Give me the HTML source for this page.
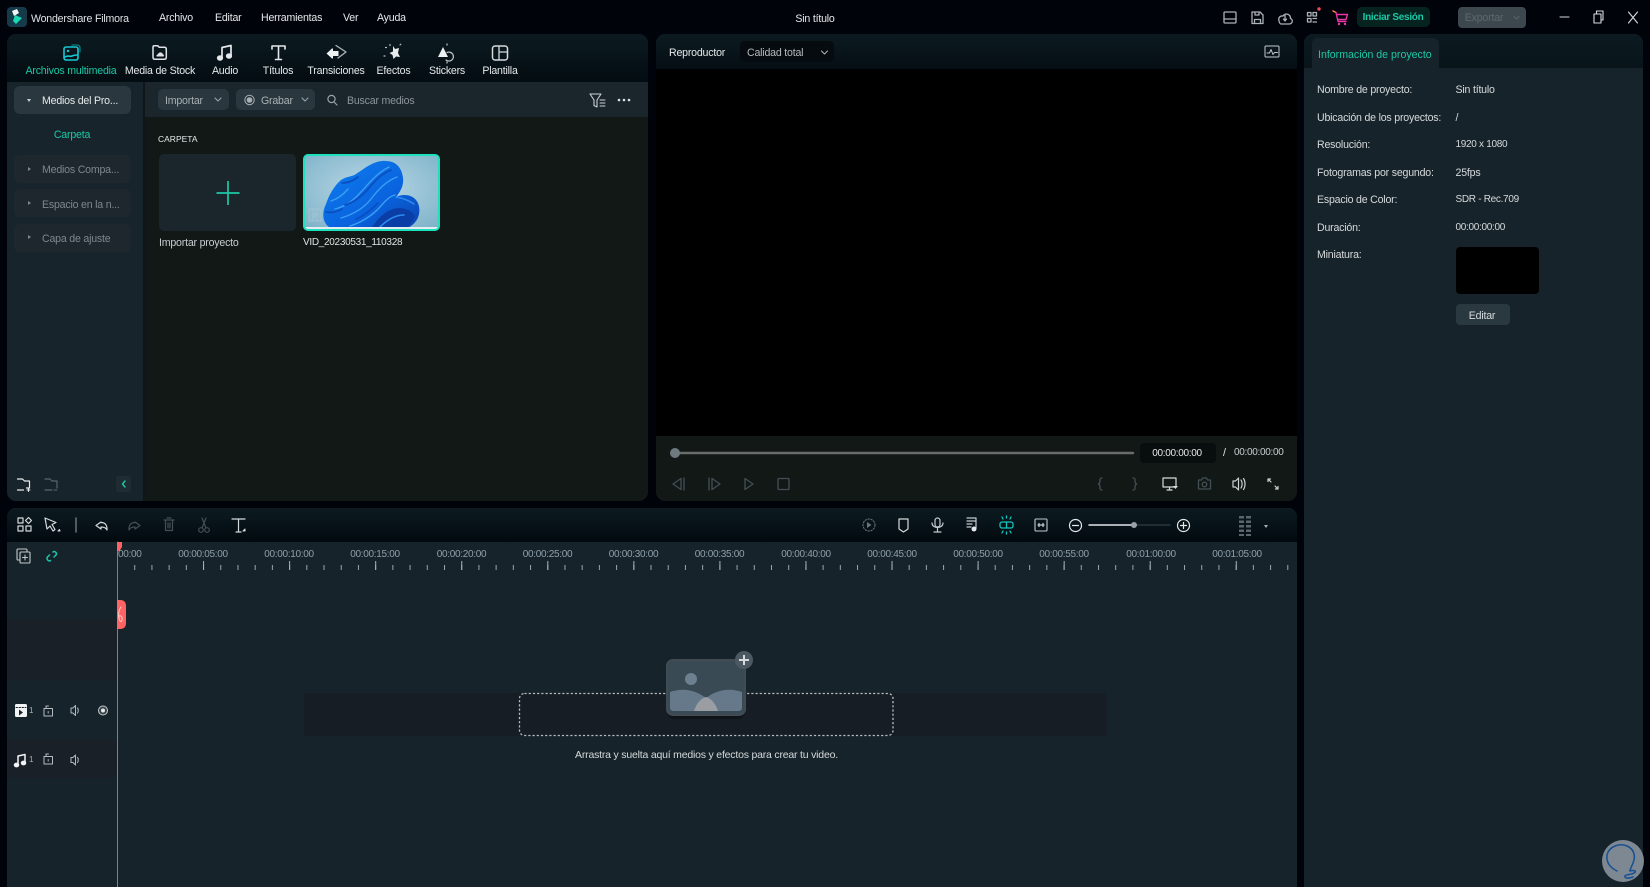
<!DOCTYPE html>
<html lang="es"><head><meta charset="utf-8"><title>Wondershare Filmora</title>
<style>
html,body{margin:0;padding:0;width:1650px;height:887px;overflow:hidden;background:#00030a}
body{position:relative;font-family:"Liberation Sans",sans-serif;font-size:10.6px;letter-spacing:-.2px;color:#d5dadc}
div{position:absolute;box-sizing:border-box}
.t{position:absolute;white-space:nowrap;transform:translateY(calc(-50% + 2px));line-height:14px}
.c{position:absolute;white-space:nowrap;transform:translate(-50%,calc(-50% + 2px));line-height:14px}
.g{color:#1cc8a6}.d{color:#7e878c}.w{color:#e6e9ea}
.n{font-size:10px;letter-spacing:-.3px}
.side{background:#1e272e;border-radius:6px;left:14px;width:117px;height:28px}
svg{position:absolute;left:0;top:0}
.r{color:#8ea0ab;font-size:10px;letter-spacing:-.3px}
</style></head><body>

<div style="left:7px;top:34px;width:641px;height:467px;background:#111816;border-radius:9px;overflow:hidden">
 <div style="left:0;top:0;width:641px;height:48px;background:linear-gradient(#0c1b21,#030c11)"></div>
 <div style="left:136px;top:48px;width:505px;height:35px;background:#1a262c"></div>
 <div style="left:0;top:48px;width:136px;height:419px;background:#18242b"></div>
 <div style="left:136px;top:48px;width:2px;height:419px;background:#0f1518"></div>
</div>
<div class="side" style="top:86px;background:#2a373e"></div>
<div class="side" style="top:155px"></div>
<div class="side" style="top:189px"></div>
<div class="side" style="top:224px"></div>
<div style="left:158px;top:89px;width:71px;height:21px;background:#2a373e;border-radius:5px"></div>
<div style="left:236px;top:89px;width:79px;height:21px;background:#2a373e;border-radius:5px"></div>
<div style="left:159px;top:154px;width:137px;height:77px;background:#1a262c;border-radius:5px"></div>
<div style="left:116px;top:476px;width:15px;height:16px;background:#1f2d33;border-radius:3px"></div>

<div style="left:656px;top:34px;width:641px;height:467px;background:#111816;border-radius:9px;overflow:hidden">
 <div style="left:0;top:0;width:641px;height:35px;background:linear-gradient(#0c1b21,#050e13)"></div>
 <div style="left:0;top:35px;width:641px;height:367px;background:#000"></div>
</div>
<div style="left:740px;top:41px;width:94px;height:21px;background:#050b0f;border-radius:5px"></div>
<div style="left:1140px;top:443px;width:76px;height:20px;background:#080d0e;border-radius:4px"></div>

<div style="left:1304px;top:34px;width:339px;height:853px;background:#17232a;border-radius:9px 9px 0 0;overflow:hidden">
 <div style="left:0;top:0;width:339px;height:34px;background:linear-gradient(#0c1b21,#08141a)"></div>
 <div style="left:8px;top:4px;width:127px;height:30px;background:#17232a;border-radius:6px 6px 0 0"></div>
</div>
<div style="left:1455.500px;top:247px;width:83px;height:47px;background:#000;border-radius:4px"></div>
<div style="left:1455.500px;top:304px;width:54px;height:21px;background:#2a383f;border-radius:4px"></div>

<div style="left:7px;top:508px;width:1290px;height:379px;background:#17232a;border-radius:9px 9px 0 0;overflow:hidden">
 <div style="left:0;top:0;width:1290px;height:34px;background:linear-gradient(#0c1b21,#020a0f)"></div>
 <div style="left:0;top:112px;width:110px;height:60px;background:#1a2027"></div>
 <div style="left:0;top:232px;width:110px;height:38px;background:#1a2027"></div>
 <div style="left:297px;top:185px;width:803px;height:43px;background:#171d25"></div>
</div>

<div style="left:1357px;top:7px;width:73px;height:20px;background:#06231f;border-radius:5px"></div>
<div style="left:1458px;top:7px;width:68px;height:21px;background:#3c474e;border-radius:4px"></div>

<svg width="1650" height="887" viewBox="0 0 1650 887" fill="none" stroke-linecap="round" stroke-linejoin="round">
 <defs>
  <pattern id="mn" x="117" y="565" width="17.21" height="5" patternUnits="userSpaceOnUse"><rect width="1" height="5" fill="#9aa6ac"/></pattern>
  <pattern id="mj" x="117" y="561" width="86.06" height="9" patternUnits="userSpaceOnUse"><rect width="1" height="9" fill="#aab3b8"/></pattern>
  <linearGradient id="bl" x1="0" y1="0" x2="1" y2="1"><stop offset="0" stop-color="#0d7ff0"/><stop offset=".6" stop-color="#0a63de"/><stop offset="1" stop-color="#0b44b0"/></linearGradient>
  <radialGradient id="sky" cx=".5" cy=".45" r=".7"><stop offset="0" stop-color="#b9d8e6"/><stop offset="1" stop-color="#7fb3c9"/></radialGradient>
  <clipPath id="tc"><rect x="304" y="155" width="135" height="75" rx="4"/></clipPath>
 </defs>
 <!-- logo -->
 <rect x="7" y="7" width="20" height="20" rx="4" fill="#153a4a"/>
 <path d="M12 11l5-2 2 4-5 3z" fill="#f2f5f5"/><path d="M15 15l7 3-6 6-3-3z" fill="#19d9b0"/>
 <!-- media tabs -->
 <g stroke="#16c9d3" stroke-width="1.6"><rect x="64" y="47" width="14" height="13" rx="2"/><circle cx="68" cy="51" r="1.2" fill="#16c9d3" stroke="none"/><path d="M65 57c3-2 5 0 7-1s4-1 5-1"/><path d="M72 45h5c2 0 3 1 3 3v4" stroke="#0d7b80" stroke-width="1.3"/></g>
 <path d="M153 47c0-.8.6-1.300 1.300-1.300h3.400l1.600 1.600h5c1.200 0 2 .8 2 2v8c0 1.200-.8 2-2 2h-9.300c-1.200 0-2-.8-2-2z" stroke="#dfe3e5" stroke-width="1.500"/>
 <path d="M157 56.500h6c1.300 0 1.300-2.300-.2-2.300-.3-2.400-4.300-2.400-4.800 0-1.600 0-2 2.300-1 2.300z" fill="#dfe3e5"/>
 <g stroke="#e4e8ea" stroke-width="1.700"><path d="M222 58V47.500l9-2V56"/><ellipse cx="220" cy="58" rx="2.300" ry="1.900" fill="#e4e8ea"/><ellipse cx="229" cy="56" rx="2.300" ry="1.900" fill="#e4e8ea"/></g>
 <path d="M272 49v-3h13v3M278.500 46v13.500M275.500 59.500h6" stroke="#e4e8ea" stroke-width="1.600"/>
 <path d="M326.500 53.500l5.500-5h1v2.500h5.500v5H333v2.500h-1z" fill="#eef1f2"/>
 <path d="M336 45.500l10 6.500-8 6" stroke="#aeb6ba" stroke-width="1.300"/>
 <path d="M393 46l2 3 4-1-1 5 2 4-4-.5-2.500 2.500-1-4-3-2 3.500-1.500z" fill="#e8ebec"/>
 <path d="M385.500 47.500h1M390 44.500v1M400 45l.8-.8M384 56h1" stroke="#b5bdc1" stroke-width="1.200"/>
 <path d="M443 47l5 10h-10z" fill="#eef1f2"/>
 <path d="M447 52.500a4.500 4.500 0 1 1-1 7.500" stroke="#c4cbce" stroke-width="1.200"/>
 <path d="M447 44v1M447 62v1" stroke="#c4cbce" stroke-width="1.200"/>
 <rect x="492.500" y="46" width="15" height="14" rx="2.500" stroke="#d5dadc" stroke-width="1.500"/><path d="M499 46v14M499 52h8.500" stroke="#d5dadc" stroke-width="1.300"/>
 <!-- sidebar arrows -->
 <path d="M27 99h4l-2 3z" fill="#c8ced1"/>
 <path d="M28 167v4l3-2zM28 201v4l3-2zM28 235v4l3-2z" fill="#7e878c"/>
 <!-- subtool -->
 <path d="M215 98l3 3 3-3M302 98l3 3 3-3" stroke="#98a2a7" stroke-width="1.100"/>
 <circle cx="249.500" cy="100" r="4.700" stroke="#a8b0b4"/><circle cx="249.500" cy="100" r="2.800" fill="#a8b0b4"/>
 <circle cx="331.500" cy="99" r="3.600" stroke="#98a2a7" stroke-width="1.200"/><path d="M334 102l3 3" stroke="#98a2a7" stroke-width="1.200"/>
 <path d="M590 94h11l-4 6v7l-3-1.500V100z" stroke="#ccd1d4" stroke-width="1.100"/><path d="M600 100h5M600 103h5M600 106h5" stroke="#ccd1d4"/>
 <circle cx="619" cy="100" r="1.300" fill="#dfe3e5"/><circle cx="624" cy="100" r="1.300" fill="#dfe3e5"/><circle cx="629" cy="100" r="1.300" fill="#dfe3e5"/>
 <path d="M216.500 193h23M228 181v24" stroke="#1cc8a6" stroke-width="1.700" stroke-linecap="butt"/>
 <!-- thumbnail -->
 <g clip-path="url(#tc)">
  <rect x="304" y="155" width="135" height="75" fill="url(#sky)"/>
  <path d="M329 227C322 222 322 212 326 204C329 195 334 186 341 180C347 176 352 177 356 174C364 169 374 160 386 161C396 161 402 168 403 178C404 186 400 192 396 197C402 194 411 194 416 200C421 206 420 216 416 221C414 224 411 226 408 228Z" fill="url(#bl)"/>
  <path d="M331 201c6-2 12-6 17-12M335 209c8-2 17-7 24-15 8-8 16-20 30-27M341 218c10-3 22-9 30-19 7-9 15-18 26-22M350 226c10-3 22-10 30-19 6-7 10-11 15-12" stroke="#3aa0f5" stroke-width="1.400"/>
  <path d="M326 212c5 1 11 0 16-3M342 183c6 0 11-2 16-6M345 205c10-3 18-10 24-17 6-7 12-14 22-18M356 219c8-3 16-10 22-16" stroke="#0a4fc0" stroke-width="1.800"/>
  <path d="M372 227c6-9 15-18 26-19 8 0 14 3 17 8-2 5-5 9-9 12z" fill="#0a3ea6"/>
  <path d="M380 227c6-6 14-12 24-12M396 197c6 1 12 3 18 7" stroke="#2d8bf0" stroke-width="1.500"/>
  <rect x="304" y="227" width="135" height="2" fill="#e4eef2"/>
 </g>
 <rect x="304" y="155" width="135" height="75" rx="4" stroke="#1fe0bc" stroke-width="2"/>
 <rect x="309" y="209" width="12" height="12" stroke="#a3c4d3" stroke-width="1" fill="#9dc0d0" fill-opacity=".3"/><path d="M313 209v12M317 209v12M314 213l3 2-3 2z" stroke="#a3c4d3" stroke-width=".8"/>
 <!-- folder icons -->
 <path d="M17.500 479h5l2 2h5v7h-3m-3 2h-6z" stroke="#e8ebec" stroke-width="1.200"/><path d="M27 490h3M28.500 488.500v3" stroke="#e8ebec"/>
 <path d="M45 479h5l2 2h5v7M52 490h-7z" stroke="#5b6468" stroke-width="1.200"/><path d="M54 490h3" stroke="#5b6468"/>
 <path d="M125 481l-2.500 3 2.500 3" stroke="#1cc8a6" stroke-width="1.400"/>
 <!-- top icons -->
 <g stroke="#aab2b6" stroke-width="1.300">
  <rect x="1224" y="12" width="12" height="11" rx="1"/><path d="M1224 19h12"/>
  <path d="M1252 12h8l3 3v8.500h-11zM1254.500 23.500v-4h6v4M1255 12v3h4v-3"/>
  <path d="M1281 24h8c3.500 0 4.500-4.500 1.500-5.500 0-4.500-5-6-7.500-2.500-3-.5-5 2-4 5 .5 2 1 3 2 3zM1285 15v6M1283.500 19l1.500 2 1.500-2"/>
  <path d="M1307.500 12.500h3.500v3.500h-3.500zM1313 12.500h3.500v3.500H1313zM1307.500 18.500h3.500V22h-3.500zM1313 18.500h3.500M1313 22h3.500"/>
 </g>
 <circle cx="1319" cy="9" r="1.700" fill="#ee4b57"/>
 <path d="M1333 11l3 1.500 2 9h8M1337 14.500h10.500l-1.500 5h-8" stroke="#e837a4" stroke-width="1.400"/><path d="M1333 11l2 1" stroke="#ef8c3a" stroke-width="1.400"/>
 <circle cx="1339" cy="24" r="1.200" fill="#e837a4"/><circle cx="1345" cy="24" r="1.200" fill="#e837a4"/>
 <path d="M1519 16.500l-2.500 2.500-2.500-2.500" stroke="#59656b"/>
 <path d="M1560 17h9" stroke="#d5dadc" stroke-width="1.100"/>
 <path d="M1594 14h7v9h-7zM1596.500 14v-3h6.500v9h-2" stroke="#d5dadc" stroke-width="1.100"/>
 <path d="M1628.500 12l9 11M1637.500 12l-9 11" stroke="#d5dadc" stroke-width="1.100"/>
 <!-- player header -->
 <path d="M821.500 51l3 3 3-3" stroke="#a8b0b4" stroke-width="1.100"/>
 <rect x="1265" y="46" width="14" height="11" rx="1" stroke="#c3c9cc"/><path d="M1267 53l2.500 0 1.500-3.500 2 5 1.500-2h3" stroke="#c3c9cc"/>
 <!-- scrubber -->
 <path d="M674 453h459" stroke="#6a6d6b" stroke-width="2.500"/><circle cx="675" cy="453" r="5" fill="#6f7a80"/>
 <!-- player controls -->
 <g stroke="#444f55" stroke-width="1.300">
  <path d="M684 478v12M681 478.500l-8 5.500 8 5.500z"/>
  <path d="M709 478v12M712 478.500l8 5.500-8 5.500z"/>
  <path d="M745 478.500l8 5.500-8 5.500z"/>
  <rect x="778" y="478.500" width="11" height="11" rx="1"/>
  <path d="M1102 478c-2 0-2 1-2 2.500s0 3-1.700 3.500c1.700.5 1.700 2 1.700 3.500s0 2.500 2 2.500"/>
  <path d="M1133 478c2 0 2 1 2 2.500s0 3 1.700 3.500c-1.700.5-1.700 2-1.700 3.500s0 2.500-2 2.500"/>
  <path d="M1198.500 480h3l1-2h4l1 2h3v9h-12z"/><circle cx="1204.500" cy="484.500" r="2.300"/>
 </g>
 <path d="M1163 478h13v9h-13zM1167 490h5M1169.500 487v3" stroke="#d5dadc" stroke-width="1.200"/><path d="M1173 486h5l-2.500 3z" fill="#d5dadc"/>
 <path d="M1233 481v6h2.500l3 3v-12l-3 3zM1241 480c1.500 2 1.500 6 0 8M1243.500 478.500c2 3 2 8 0 11" stroke="#ccd1d4" stroke-width="1.200"/>
 <path d="M1268 479l3 3M1268 479h2.500M1268 479v2.500M1278 489l-3-3M1278 489h-2.500M1278 489v-2.500" stroke="#ccd1d4" stroke-width="1.200"/>
 <!-- timeline tools -->
 <g stroke="#d5dadc" stroke-width="1.200">
  <rect x="18" y="518" width="5" height="5"/><rect x="18" y="526" width="5" height="5"/><rect x="26" y="526" width="5" height="5"/><path d="M28.500 517.500l3 3-3 3-3-3z"/>
  <path d="M45 518l11 4.500-4 2 3 5-2 1.500-3-5-3 3z"/>
  <path d="M101 522l-5 3.500 5 3.500v-2c3 0 5 .5 6 3 .3-5-2-7.500-6-7.500z"/>
  <path d="M232 519h13M238.500 519v13M236 532h5"/>
 </g>
 <path d="M58 531h2l-.5-1.500zM243 531h2v-2z" fill="#d5dadc" stroke="#d5dadc"/>
 <path d="M76 518v14" stroke="#6a7378" stroke-width="1.500"/>
 <g stroke="#444f55" stroke-width="1.200">
  <path d="M135 522l5 3.500-5 3.500v-2c-3 0-5 .5-6 3-.3-5 2-7.500 6-7.500z"/>
  <path d="M164 520h10M165.500 520v10.500h7V520M167 518h4M168 523v5M170 523v5"/>
  <circle cx="201" cy="530" r="2.300"/><circle cx="207" cy="530" r="2.300"/><path d="M202 528l4-10M206 528l-4-10"/>
 </g>
 <circle cx="869" cy="525" r="6" stroke="#6a7378" stroke-dasharray="1.500 1.500"/><path d="M867 522l4.500 3-4.500 3z" fill="#6a7378"/>
 <path d="M899 519h9v10l-4.500 3-4.500-3z" stroke="#d5dadc" stroke-width="1.200"/>
 <rect x="935" y="518" width="5" height="9" rx="2.500" stroke="#c3c9cc" stroke-width="1.200"/><path d="M932 523c0 6 11 6 11 0M937.500 528v3M934 532h7" stroke="#c3c9cc" stroke-width="1.200"/>
 <path d="M967 518h9M967 521h9M967 524h5M967 527h4M976 518v10" stroke="#c3c9cc" stroke-width="1.200"/><circle cx="974" cy="529" r="2.500" fill="#e4e8ea"/>
 <g stroke="#14c4bd" stroke-width="1.300"><rect x="1000" y="522" width="13" height="6" rx="2"/><path d="M1006.500 522v6M1002 533l1-2M1006.500 534v-2M1011 533l-1-2M1002 517l1 2M1006.500 516v2M1011 517l-1 2"/></g>
 <rect x="1035" y="519" width="12" height="12" rx="1" stroke="#c3c9cc" stroke-width="1.100"/><path d="M1038 525h6M1039 523.500v3M1043 523.500v3" stroke="#c3c9cc" stroke-width="1.300"/>
 <circle cx="1075.500" cy="525.500" r="6" stroke="#e4e8ea" stroke-width="1.200"/><path d="M1072.500 525.500h6" stroke="#e4e8ea" stroke-width="1.200"/>
 <path d="M1089 525h45" stroke="#e4e8ea" stroke-width="1.500"/><path d="M1134 525h36" stroke="#2a363c" stroke-width="1.500"/><circle cx="1134" cy="525" r="3" fill="#98a2a7"/>
 <circle cx="1183.500" cy="525.500" r="6" stroke="#e4e8ea" stroke-width="1.200"/><path d="M1180.500 525.500h6M1183.500 522.500v6" stroke="#e4e8ea" stroke-width="1.200"/>
 <g fill="#5b666c"><rect x="1239" y="516" width="5" height="2.500"/><rect x="1246" y="516" width="5" height="2.500"/><rect x="1239" y="520.500" width="5" height="2.500"/><rect x="1246" y="520.500" width="5" height="2.500"/><rect x="1239" y="525" width="5" height="2.500"/><rect x="1246" y="525" width="5" height="2.500"/><rect x="1239" y="529.500" width="5" height="2.500"/><rect x="1246" y="529.500" width="5" height="2.500"/><rect x="1239" y="534" width="5" height="2"/><rect x="1246" y="534" width="5" height="2"/></g>
 <path d="M1264 525h4l-2 3z" fill="#a8b0b4"/>
 <!-- ruler -->
 <rect x="17" y="549" width="10" height="11" rx="1" stroke="#c3c9cc" fill="#17232a" stroke-width="1.100"/>
 <rect x="20" y="552" width="10" height="11" rx="1" stroke="#c3c9cc" fill="#17232a" stroke-width="1.100"/><path d="M22.500 557.500h5M25 555v5" stroke="#c3c9cc"/>
 <path d="M53 552c1.500-1.500 4.500 1 3 3l-2 2M49.500 555l-2 2c-1.500 2 1 5 3 3.500" stroke="#18c6aa" stroke-width="1.500"/>
 <rect x="117" y="565" width="1180" height="5" fill="url(#mn)"/>
 <rect x="117" y="561" width="1180" height="9" fill="url(#mj)"/>
 <!-- playhead -->
 <path d="M117.500 542v345" stroke="#e2575b" stroke-width="1"/>
 <path d="M117 542h5v5l-2.500 4H117z" fill="#ff6363"/>
 <path d="M117 600h3c4 0 6 2 6 6v17c0 4-2 6-6 6h-3z" fill="#ff6363"/>
 <path d="M121 607c-3 4-3 10-1 14 2 2 3-3 1-5-2-1-2 1-2 2" stroke="#ffc9c9"/>
 <!-- track headers -->
 <rect x="15" y="704" width="12" height="13" rx="1.500" fill="#f1f3f4"/><path d="M16 707.500h10" stroke="#17232a" stroke-dasharray="1.500 1.500"/><path d="M19 709.500l4 3-4 3z" fill="#17232a"/>
 <g stroke="#b3babe"><path d="M44 708.500h8.500V716H44zM46 708.500v-2.500h2.500M48.200 711.500v1.500"/>
  <path d="M44 756.500h8.500v7.500H44zM46 756.500V754h2.500M48.200 759.500v1.500"/>
  <path d="M71 708v5h2l2.500 2.500V705.500L73 708zM77.500 708c1 1 1 4 0 5"/>
  <path d="M71 757.500v5h2l2.500 2.500v-10l-2.500 2.500zM77.500 757.500c1 1 1 4 0 5"/></g>
 <circle cx="103" cy="710.500" r="4.500" stroke="#c3c9cc" fill="#c3c9cc" fill-opacity=".2"/><circle cx="103" cy="710.500" r="2" fill="#e4e8ea"/>
 <g stroke="#f1f3f4" stroke-width="1.500"><path d="M18 765v-9l7-1.500V763"/><ellipse cx="16.500" cy="765" rx="2" ry="1.600" fill="#f1f3f4"/><ellipse cx="23.500" cy="763" rx="2" ry="1.600" fill="#f1f3f4"/></g>
 <!-- drop zone dashes -->
 <rect x="519.500" y="693.500" width="373.500" height="42" rx="5" stroke="#b5bbbf" stroke-width="1.300" stroke-dasharray="2.200 2" stroke-linecap="butt"/>
 <!-- drop image -->
 <rect x="667" y="664" width="78" height="55" rx="7" fill="#000" opacity=".3"/>
 <rect x="667" y="660" width="78" height="55" rx="6" fill="#3a4a54" stroke="#414c52" stroke-width="2"/>
 <ellipse cx="691" cy="679" rx="6" ry="6" fill="#6d8090"/>
 <path d="M670 692c12-4 24-3 36 6 12-9 24-10 36-6v16c0 2-2 3-4 3h-64c-2 0-4-1-4-3z" fill="#66798a"/>
 <path d="M694 711c3-9 8-13 12-14 4 1 9 5 12 14z" fill="#9a9ea3"/>
 <circle cx="744" cy="660" r="9" fill="#4d5962"/><path d="M739 660h10M744 655v10" stroke="#d5dadc" stroke-width="2" stroke-linecap="butt"/>
 <!-- watermark -->
 <circle cx="1623" cy="861" r="21" fill="#7d8893"/>
 <path d="M1617 871c-6-3-11-8-10-16 2-9 13-12 20-9 7 3 9 10 6 17-1 3-3 6-3 8 3-1 8 0 4 2-3 2-8 1-9 3-1 2 3 3 8 1" stroke="#164f93" stroke-width="1.500"/>
</svg>

<span class="t" style="left:31px;top:16.500px;color:#dfe3e5">Wondershare Filmora</span>
<span class="t w" style="left:159px;top:15.500px;">Archivo</span>
<span class="t w" style="left:215px;top:15.500px;">Editar</span>
<span class="t w" style="left:261px;top:15.500px;">Herramientas</span>
<span class="t w" style="left:343px;top:15.500px;">Ver</span>
<span class="t w" style="left:377px;top:15.500px;">Ayuda</span>
<span class="c w" style="left:815px;top:16.500px;">Sin título</span>
<span class="c g" style="left:1393px;top:15.500px;font-size:10px;letter-spacing:-.3px;font-weight:bold">Iniciar Sesión</span>
<span class="c" style="left:1484px;top:16px;color:#5d686e;">Exportar</span>

<span class="c g" style="left:71px;top:68.500px;">Archivos multimedia</span>
<span class="c w" style="left:160px;top:68.500px;">Media de Stock</span>
<span class="c w" style="left:225px;top:68.500px;">Audio</span>
<span class="c w" style="left:278px;top:68.500px;">Títulos</span>
<span class="c w" style="left:336px;top:68.500px;">Transiciones</span>
<span class="c w" style="left:393.500px;top:68.500px;">Efectos</span>
<span class="c w" style="left:447px;top:68.500px;">Stickers</span>
<span class="c w" style="left:500px;top:68.500px;">Plantilla</span>

<span class="t w" style="left:42px;top:99px;">Medios del Pro...</span>
<span class="c g" style="left:72px;top:133px;">Carpeta</span>
<span class="t d" style="left:42px;top:168px;">Medios Compa...</span>
<span class="t d" style="left:42px;top:203px;">Espacio en la n...</span>
<span class="t d" style="left:42px;top:237px;">Capa de ajuste</span>

<span class="t" style="left:165px;top:98.500px;color:#a8b0b4">Importar</span>
<span class="t" style="left:261px;top:98.500px;color:#a8b0b4">Grabar</span>
<span class="t" style="left:347px;top:99px;color:#8b9499;">Buscar medios</span>
<span class="t w" style="left:158px;top:137px;font-size:8.500px;letter-spacing:0">CARPETA</span>
<span class="t" style="left:159px;top:240.500px;color:#c8ced1;">Importar proyecto</span>
<span class="t n" style="left:303px;top:240.500px;color:#dfe3e5;">VID_20230531_110328</span>

<span class="t w" style="left:669px;top:50.500px;">Reproductor</span>
<span class="t" style="left:747px;top:50.500px;color:#b3babe;">Calidad total</span>
<span class="c w n" style="left:1177px;top:452px;">00:00:00:00</span>
<span class="t w" style="left:1223px;top:451px;">/</span>
<span class="t n" style="left:1234px;top:451px;color:#c8ced1;">00:00:00:00</span>

<span class="t g" style="left:1318px;top:52.500px;letter-spacing:0">Información de proyecto</span>
<span class="t" style="left:1317px;top:88px;">Nombre de proyecto:</span><span class="t" style="left:1455.500px;top:88px;">Sin título</span>
<span class="t" style="left:1317px;top:115.500px;">Ubicación de los proyectos:</span><span class="t" style="left:1455.500px;top:115.500px;">/</span>
<span class="t" style="left:1317px;top:143px;">Resolución:</span><span class="t n" style="left:1455.500px;top:143px;">1920 x 1080</span>
<span class="t" style="left:1317px;top:170.500px;">Fotogramas por segundo:</span><span class="t" style="left:1455.500px;top:170.500px;">25fps</span>
<span class="t" style="left:1317px;top:198px;">Espacio de Color:</span><span class="t n" style="left:1455.500px;top:198px;">SDR - Rec.709</span>
<span class="t" style="left:1317px;top:225.500px;">Duración:</span><span class="t n" style="left:1455.500px;top:225.500px;">00:00:00:00</span>
<span class="t" style="left:1317px;top:253px;">Miniatura:</span>
<span class="c" style="left:1482px;top:313.500px;">Editar</span>

<span class="t r" style="left:118px;top:552.500px;">00:00</span>
<span class="c r" style="left:203px;top:552.500px;">00:00:05:00</span>
<span class="c r" style="left:289px;top:552.500px;">00:00:10:00</span>
<span class="c r" style="left:375px;top:552.500px;">00:00:15:00</span>
<span class="c r" style="left:461.500px;top:552.500px;">00:00:20:00</span>
<span class="c r" style="left:547.500px;top:552.500px;">00:00:25:00</span>
<span class="c r" style="left:633.500px;top:552.500px;">00:00:30:00</span>
<span class="c r" style="left:719.500px;top:552.500px;">00:00:35:00</span>
<span class="c r" style="left:806px;top:552.500px;">00:00:40:00</span>
<span class="c r" style="left:892px;top:552.500px;">00:00:45:00</span>
<span class="c r" style="left:978px;top:552.500px;">00:00:50:00</span>
<span class="c r" style="left:1064px;top:552.500px;">00:00:55:00</span>
<span class="c r" style="left:1151px;top:552.500px;">00:01:00:00</span>
<span class="c r" style="left:1237px;top:552.500px;">00:01:05:00</span>

<span class="t" style="left:29px;top:709px;font-size:8px;color:#a8b0b4">1</span>
<span class="t" style="left:29px;top:758px;font-size:8px;color:#a8b0b4">1</span>
<span class="c" style="left:706.500px;top:753px;color:#d5dadc;font-size:10.500px;letter-spacing:-.2px">Arrastra y suelta aquí medios y efectos para crear tu video.</span>
</body></html>
